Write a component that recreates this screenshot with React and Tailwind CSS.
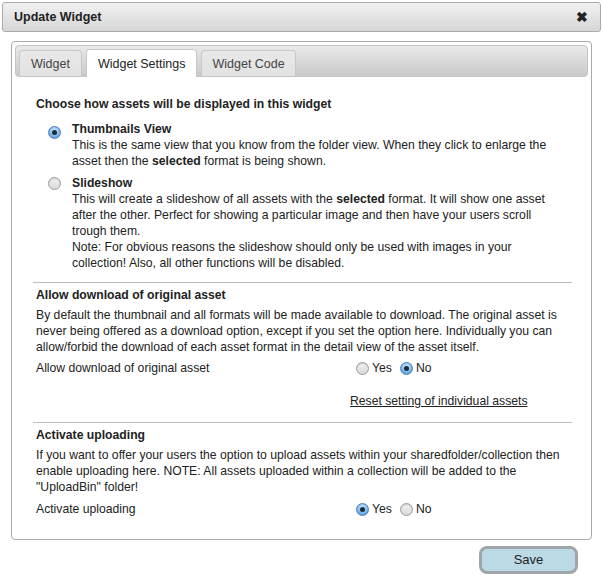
import { useState } from 'react';

const Radio = ({ checked, onClick }) => (
    <span
        onClick={onClick}
        className={`inline-flex items-center justify-center w-[13px] h-[13px] rounded-full border shrink-0 cursor-pointer ${checked
            ? 'border-[#4a7fb8] bg-[radial-gradient(circle_at_50%_35%,#d6ecfb_0%,#7fb7ea_55%,#3d86d0_100%)]'
            : 'border-[#9a9a9a] bg-[linear-gradient(#f2f2f2,#d9d9d9)] shadow-[inset_0_1px_1px_rgba(0,0,0,0.15)]'}`}
    >
        {checked && <span className="w-[5px] h-[5px] rounded-full bg-[#1b2a3a]" />}
    </span>
);

const YesNo = ({ value, setValue }) => (
    <div className="flex items-center gap-[8px]">
        <label className="flex items-center gap-[3px] cursor-pointer" onClick={() => setValue(true)}>
            <Radio checked={value === true} />
            <span>Yes</span>
        </label>
        <label className="flex items-center gap-[3px] cursor-pointer" onClick={() => setValue(false)}>
            <Radio checked={value === false} />
            <span>No</span>
        </label>
    </div>
);

const App = () => {
    const [view, setView] = useState('thumbs');
    const [allowOriginal, setAllowOriginal] = useState(false);
    const [uploading, setUploading] = useState(true);

    return (
        <div className="w-[603px] h-[582px] bg-white text-[#222] text-[12.2px] leading-[16px] font-['Liberation_Sans',Arial,sans-serif] pt-[2px]">
            {/* title bar */}
            <div className="mx-[2px] h-[30px] flex items-center justify-between pl-[11px] pr-[12px] rounded-[3px] border border-[#aaa] bg-[linear-gradient(#f1f1f1,#d6d6d6)]">
                <span className="font-bold text-[12.5px] text-[#222]">Update Widget</span>
                <span className="font-bold text-[14px] text-[#222] leading-none">✖</span>
            </div>

            {/* panel */}
            <div className="mx-[11px] mt-[9px] h-[499px] rounded-[4px] border border-[#aaa] p-[3px]">
                <div className="h-[32px] rounded-[4px] border border-[#c4c4c4] bg-[linear-gradient(#e9e9e9,#c9c9c9)] flex items-end gap-[4px] pl-[3px]">
                    <div className="h-[26px] px-[11px] flex items-center rounded-t-[4px] border border-b-0 border-[#c8c8c8] bg-[linear-gradient(#e8e8e8,#e2e2e2)] text-[#444] text-[12.5px]">Widget</div>
                    <div className="h-[28px] -mb-px px-[11px] flex items-center rounded-t-[4px] border border-b-0 border-[#c8c8c8] bg-white text-[#222] text-[12.5px]">Widget Settings</div>
                    <div className="h-[26px] px-[10px] flex items-center rounded-t-[4px] border border-b-0 border-[#c8c8c8] bg-[linear-gradient(#e8e8e8,#e2e2e2)] text-[#444] text-[12.5px]">Widget Code</div>
                </div>

                <div className="pl-[21px] pr-[22px] pt-[19px]">
                    <h3 className="font-bold">Choose how assets will be displayed in this widget</h3>

                    <div className="mt-[9px] pl-[12px] flex flex-col gap-[6px]">
                        <div className="flex gap-[11px] cursor-pointer" onClick={() => setView('thumbs')}>
                            <span className="pt-[2px]"><Radio checked={view === 'thumbs'} /></span>
                            <div>
                                <div className="font-bold">Thumbnails View</div>
                                <div>This is the same view that you know from the folder view. When they click to enlarge the asset then the <b>selected</b> format is being shown.</div>
                            </div>
                        </div>
                        <div className="flex gap-[11px] cursor-pointer" onClick={() => setView('slideshow')}>
                            <span className="pt-[2px]"><Radio checked={view === 'slideshow'} /></span>
                            <div>
                                <div className="font-bold">Slideshow</div>
                                <div>This will create a slideshow of all assets with the <b>selected</b> format. It will show one asset after the other. Perfect for showing a particular image and then have your users scroll trough them.</div>
                                <div>Note: For obvious reasons the slideshow should only be used with images in your collection! Also, all other functions will be disabled.</div>
                            </div>
                        </div>
                    </div>
                </div>

                <div className="ml-[18px] mr-[16px] mt-[11px] border-t border-[#bdbdbd]" />
                <div className="pl-[21px] pr-[22px] pt-[4px]">
                    <h3 className="font-bold">Allow download of original asset</h3>
                    <p className="mt-[4px]">By default the thumbnail and all formats will be made available to download. The original asset is never being offered as a download option, except if you set the option here. Individually you can allow/forbid the download of each asset format in the detail view of the asset itself.</p>
                    <div className="mt-[5px] flex">
                        <span className="w-[320px]">Allow download of original asset</span>
                        <YesNo value={allowOriginal} setValue={setAllowOriginal} />
                    </div>
                    <div className="mt-[17px] pl-[314px] pb-[13px]">
                        <a className="underline cursor-pointer">Reset setting of individual assets</a>
                    </div>
                </div>

                <div className="ml-[18px] mr-[16px] border-t border-[#bdbdbd]" />
                <div className="pl-[21px] pr-[22px] pt-[4px]">
                    <h3 className="font-bold">Activate uploading</h3>
                    <p className="mt-[4px]">If you want to offer your users the option to upload assets within your sharedfolder/collection then enable uploading here. NOTE: All assets uploaded within a collection will be added to the "UploadBin" folder!</p>
                    <div className="mt-[6px] flex">
                        <span className="w-[320px]">Activate uploading</span>
                        <YesNo value={uploading} setValue={setUploading} />
                    </div>
                </div>
            </div>

            <div className="flex justify-end pr-[25px] mt-[6px]">
                <button
                    type="button"
                    className="w-[99px] h-[28px] rounded-[8px] border-[3px] border-[#9ea6aa] bg-[#bcd9e6] text-[13px] text-[#222] cursor-pointer"
                >
                    Save
                </button>
            </div>
        </div>
    );
};

export default App;
